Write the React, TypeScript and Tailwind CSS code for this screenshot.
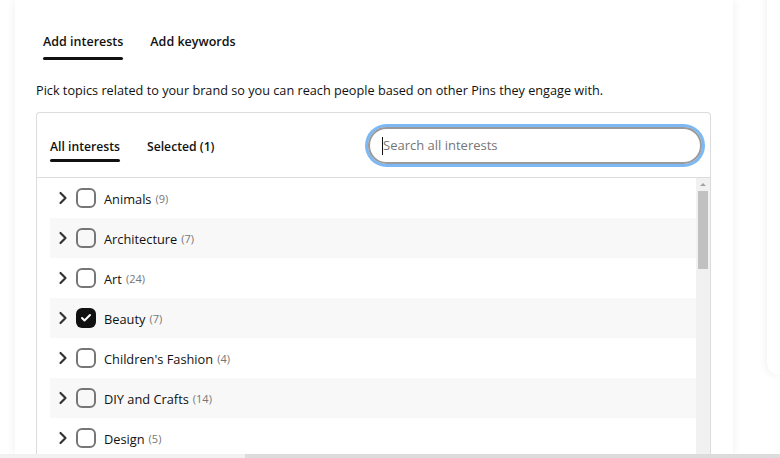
import { ChevronRight, Check } from "lucide-react";

const interests = [
  { name: "Animals", count: 9 },
  { name: "Architecture", count: 7 },
  { name: "Art", count: 24 },
  { name: "Beauty", count: 7, checked: true },
  { name: "Children's Fashion", count: 4 },
  { name: "DIY and Crafts", count: 14 },
  { name: "Design", count: 5 },
];

export default function App() {
  return (
    <div className="flex h-[458px] w-[780px] flex-col overflow-hidden bg-white font-['Open_Sans',sans-serif] text-[#111]">
      <div className="flex min-h-0 flex-1">
        {/* Main card */}
        <div className="ml-[15px] w-[718px] shrink-0 bg-white pl-[21px] shadow-[0_0_10px_rgba(0,0,0,0.07)]">
          {/* Top tabs */}
          <div className="flex gap-[27px] pl-[7px] pt-[32px] text-[12.5px] font-semibold">
            <div className="flex flex-col">
              <span className="h-[20px] leading-[20px]">Add interests</span>
              <div className="mt-[5px] h-[3px] rounded-full bg-[#111]" />
            </div>
            <span className="h-[20px] leading-[20px]">Add keywords</span>
          </div>

          <p className="mt-[21px] text-[12.7px] leading-[18px] text-[#111]">
            Pick topics related to your brand so you can reach people based on other Pins they engage with.
          </p>

          {/* Interests box */}
          <div className="mt-[13px] w-[675px] rounded-t-[4px] border border-b-0 border-[#dcdcdc]">
            <div className="flex h-[65px] items-center border-b border-[#dcdcdc] pl-[13px] pr-[8px]">
              <div className="flex gap-[27px] text-[12.2px] font-semibold">
                <div className="flex flex-col pt-[10px]">
                  <span className="h-[18px] leading-[18px]">All interests</span>
                  <div className="mt-[3px] h-[3px] rounded-full bg-[#111]" />
                </div>
                <span className="box-content h-[18px] pt-[10px] leading-[18px]">Selected (1)</span>
              </div>
              <div className="ml-auto flex h-[37px] w-[334px] items-center rounded-full border-2 border-[#9a9a9a] pl-[12px] pt-[2px] shadow-[0_0_0_3px_#7cb8f3]">
                <span className="h-[18px] w-px bg-[#111]" />
                <span className="text-[13px] text-[#767676]">Search all interests</span>
              </div>
            </div>

            <div className="flex">
              <div className="flex-1 pl-[13px]">
                {interests.map((item, i) => (
                  <div
                    key={item.name}
                    className={`flex h-[40px] items-center pl-[3px] ${i % 2 === 1 ? "bg-[#f8f8f8]" : "bg-white"}`}
                  >
                    <ChevronRight size={20} strokeWidth={2.6} className="text-[#333]" />
                    {item.checked ? (
                      <div className="ml-[3px] flex h-[20px] w-[20px] items-center justify-center rounded-[6px] bg-[#111]">
                        <Check size={12} strokeWidth={4} className="text-white" />
                      </div>
                    ) : (
                      <div className="ml-[3px] h-[20px] w-[20px] rounded-[6px] border-2 border-[#767676]" />
                    )}
                    <span className="ml-[8px] pt-[3px] text-[12.8px]">{item.name}</span>
                    <span className="ml-[4px] pt-[3px] text-[11px] text-[#767676]">({item.count})</span>
                  </div>
                ))}
              </div>
              {/* Scrollbar */}
              <div className="flex w-[14px] flex-col items-center bg-[#f1f1f1]">
                <div className="mt-[5px] h-0 w-0 border-x-[3px] border-b-[3px] border-x-transparent border-b-[#a3a3a3]" />
                <div className="mt-[5px] h-[78px] w-[10px] bg-[#c1c1c1]" />
              </div>
            </div>
          </div>
        </div>

        {/* Right card */}
        <div className="-mt-[10px] ml-[34px] h-[385px] flex-1 rounded-bl-[12px] bg-white shadow-[0_0_10px_rgba(0,0,0,0.08)]" />
      </div>

      {/* Page horizontal scrollbar */}
      <div className="flex h-[4px] bg-[#f1f1f1]">
        <div className="ml-[245px] flex-1 bg-[#dcdcdc]" />
      </div>
    </div>
  );
}
